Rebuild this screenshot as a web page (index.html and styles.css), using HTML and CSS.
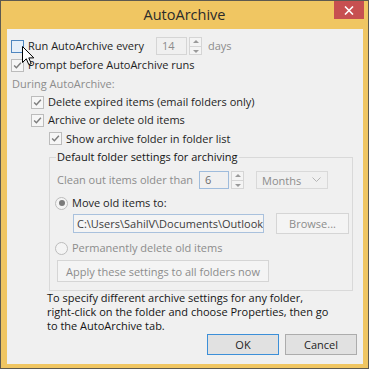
FILE: index.html
```html
<!DOCTYPE html>
<html>
<head>
<meta charset="utf-8">
<title>AutoArchive</title>
<link rel="stylesheet" href="styles.css">
</head>
<body>
<div class="window">
  <div class="titlebar">
    <span class="title">AutoArchive</span>
    <div class="close">
      <svg width="10" height="9" viewBox="0 0 10 9"><path d="M1 0.5 L9 8.5 M9 0.5 L1 8.5" stroke="#fff" stroke-width="1.6" fill="none"/></svg>
    </div>
  </div>
  <div class="client">
    <div class="row r1">
      <span class="cb hover"></span>
      <span class="lbl wrun">Run AutoArchive every</span>
      <span class="field f14">14</span>
      <span class="spin"><span class="up"></span><span class="dn"></span></span>
      <span class="lbl dis days">days</span>
    </div>
    <div class="row r2">
      <span class="cb checked"><svg viewBox="0 0 13 13"><path d="M2.5 6.5 L5.2 9.2 L10.5 3.2"/></svg></span>
      <span class="lbl">Prompt before AutoArchive runs</span>
    </div>
    <div class="row r3">
      <span class="lbl dis">During AutoArchive:</span>
    </div>
    <div class="row r4">
      <span class="cb checked"><svg viewBox="0 0 13 13"><path d="M2.5 6.5 L5.2 9.2 L10.5 3.2"/></svg></span>
      <span class="lbl">Delete expired items (email folders only)</span>
    </div>
    <div class="row r5">
      <span class="cb checked"><svg viewBox="0 0 13 13"><path d="M2.5 6.5 L5.2 9.2 L10.5 3.2"/></svg></span>
      <span class="lbl">Archive or delete old items</span>
    </div>
    <div class="row r6">
      <span class="cb checked"><svg viewBox="0 0 13 13"><path d="M2.5 6.5 L5.2 9.2 L10.5 3.2"/></svg></span>
      <span class="lbl">Show archive folder in folder list</span>
    </div>
    <fieldset class="group">
      <legend>Default folder settings for archiving</legend>
      <div class="row g1">
        <span class="lbl dis wclean">Clean out items older than</span>
        <span class="field f6">6</span>
        <span class="spin"><span class="up"></span><span class="dn"></span></span>
        <span class="select">Months<svg width="9" height="6" viewBox="0 0 9 6"><path d="M0.5 0.5 L4.5 4.5 L8.5 0.5" stroke="#b5b5b5" stroke-width="1" fill="none"/></svg></span>
      </div>
      <div class="row g2">
        <span class="rb on"></span>
        <span class="lbl">Move old items to:</span>
      </div>
      <div class="row g3">
        <span class="field path">C:\Users\SahilV\Documents\Outlook</span>
        <span class="btn dis browse">Browse...</span>
      </div>
      <div class="row g4">
        <span class="rb"></span>
        <span class="lbl dis">Permanently delete old items</span>
      </div>
      <div class="row g5">
        <span class="btn dis apply">Apply these settings to all folders now</span>
      </div>
    </fieldset>
    <p class="note">To specify different archive settings for any folder,<br>right-click on the folder and choose Properties, then go<br>to the AutoArchive tab.</p>
    <div class="actions">
      <span class="btn default">OK</span>
      <span class="btn">Cancel</span>
    </div>
  </div>
  <svg class="cursor" width="13" height="21" viewBox="0 0 13 21"><path d="M0.5 0.5 L0.5 16.5 L4.3 12.8 L6.8 18.6 L9.2 17.6 L6.8 11.9 L11.8 11.9 Z" fill="#fff" stroke="#000" stroke-width="1" stroke-linejoin="miter"/></svg>
</div>
</body>
</html>
```

FILE: styles.css
```css
* { box-sizing: border-box; }
html, body { margin: 0; padding: 0; }
body {
  width: 369px;
  height: 369px;
  overflow: hidden;
  font-family: "Open Sans", "Noto Sans", sans-serif;
  font-size: 11px;
  color: #1e1e1e;
}
.window {
  position: relative;
  width: 369px;
  height: 369px;
  background: #f0c662;
  border: 1px solid #5e5a50;
  display: flex;
  flex-direction: column;
}
.titlebar {
  height: 28px;
  flex: 0 0 28px;
  display: flex;
  align-items: center;
  justify-content: center;
}
.title {
  font-size: 14.5px;
  color: #2b2b2b;
  margin-top: -2px;
}
.close {
  position: absolute;
  top: 0;
  right: 4px;
  width: 30px;
  height: 18px;
  background: #c75050;
  display: flex;
  align-items: center;
  justify-content: center;
}
.client {
  flex: 1;
  margin: 0 5px 4px 6px;
  background: #f0f0f0;
  padding-top: 7px;
  display: flex;
  flex-direction: column;
}
.row {
  display: flex;
  align-items: center;
  white-space: nowrap;
}
.lbl { line-height: 14px; }
.dis { color: #8c8c8c; }
.r1 { height: 20px; padding-left: 4px; }
.r2 { height: 18px; padding-left: 4px; }
.r3 { height: 19px; padding-left: 5px; }
.r4 { height: 18px; padding-left: 24px; }
.r5 { height: 18px; padding-left: 24px; }
.r6 { height: 19px; padding-left: 42px; }
.cb {
  width: 13px;
  height: 13px;
  flex: 0 0 13px;
  border: 1px solid #bcbcbc;
  background: #f6f6f6;
  margin-right: 4px;
  display: block;
}
.cb svg { display: block; width: 11px; height: 11px; }
.cb svg path { fill: none; stroke: #7d7d7d; stroke-width: 1.7; }
.cb.hover {
  border-color: #4f86bf;
  background: #e6eff9;
}
.wrun { width: 128px; flex: 0 0 128px; }
.field {
  display: block;
  height: 18px;
  border: 1px solid #d5d5d5;
  background: #f0f0f0;
  color: #8c8c8c;
  padding: 0 5px;
  line-height: 16px;
  overflow: hidden;
}
.f14 { width: 31px; }
.f6 { width: 30px; border-color: #9fbcdc; color: #6d6d6d; }
.spin {
  width: 13px;
  height: 18px;
  margin-left: 2px;
  border: 1px solid #d5d5d5;
  background: #f4f4f4;
  display: flex;
  flex-direction: column;
}
.spin .up, .spin .dn {
  flex: 1;
  position: relative;
}
.spin .up { border-bottom: 1px solid #d5d5d5; }
.spin .up::after, .spin .dn::after {
  content: "";
  position: absolute;
  left: 3px;
  width: 0; height: 0;
  border-left: 3px solid transparent;
  border-right: 3px solid transparent;
}
.spin .up::after { top: 2px; border-bottom: 3px solid #9a9a9a; }
.spin .dn::after { top: 3px; border-top: 3px solid #9a9a9a; }
.days { margin-left: 6px; }
.group {
  margin: 1px 10px 0 42px;
  padding: 0 0 8px 0;
  border: 1px solid #d9d9d9;
  min-width: 0;
}
.group legend {
  margin-left: 6px;
  padding: 0 1px;
  line-height: 16px;
  color: #141414;
}
.g1 { height: 18px; margin-top: 6px; padding-left: 7px; }
.wclean { width: 142px; flex: 0 0 142px; }
.g1 .spin { margin-left: 2px; }
.select {
  margin-left: 12px;
  width: 72px;
  height: 18px;
  border: 1px solid #d9d9d9;
  background: #f0f0f0;
  color: #8c8c8c;
  display: flex;
  align-items: center;
  justify-content: space-between;
  padding: 0 6px 0 5px;
}
.g2 { height: 18px; margin-top: 5px; padding-left: 5px; }
.rb {
  width: 13px;
  height: 13px;
  flex: 0 0 13px;
  border: 1px solid #bcbcbc;
  border-radius: 50%;
  background: #f4f4f4;
  margin-right: 4px;
  position: relative;
}
.rb.on::after {
  content: "";
  position: absolute;
  left: 2.5px; top: 2.5px;
  width: 6px; height: 6px;
  border-radius: 50%;
  background: #7a7a7a;
}
.g3 { height: 21px; margin-top: 1px; padding-left: 23px; }
.path {
  width: 191px;
  height: 19px;
  border-color: #a9c1dd;
  background: #f4f4f4;
  color: #3c3c3c;
  padding: 0 3px;
  line-height: 17px;
}
.btn {
  display: flex;
  align-items: center;
  justify-content: center;
  height: 21px;
  border: 1px solid #acacac;
  background: #e1e1e1;
  color: #1e1e1e;
}
.btn.dis {
  border-color: #d5d5d5;
  background: #f4f4f4;
  color: #8c8c8c;
}
.browse { width: 73px; margin-left: 12px; }
.g4 { height: 18px; margin-top: 5px; padding-left: 5px; }
.g5 { height: 22px; margin-top: 3px; padding-left: 7px; }
.apply { width: 212px; height: 22px; }
.note {
  margin: 0 0 0 40px;
  line-height: 14px;
  color: #141414;
  white-space: nowrap;
}
.actions {
  display: flex;
  justify-content: flex-end;
  gap: 6px;
  margin: 1px 6px 0 0;
}
.actions .btn { width: 72px; height: 21px; }
.btn.default { border-color: #3c8fd8; }
.cursor {
  position: absolute;
  left: 21px;
  top: 45px;
}
```
